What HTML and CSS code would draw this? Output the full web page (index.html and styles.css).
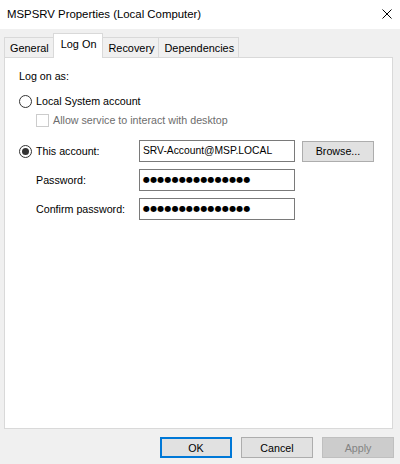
FILE: index.html
```html
<!DOCTYPE html>
<html>
<head>
<meta charset="utf-8">
<link rel="stylesheet" href="styles.css">
</head>
<body>
<div class="window">
  <div class="titlebar">
    <span class="title">MSPSRV Properties (Local Computer)</span>
    <svg class="close" width="10" height="10" viewBox="0 0 10 10"><path d="M0.5 0.5L9.5 9.5M9.5 0.5L0.5 9.5" stroke="#000" stroke-width="1" fill="none"/></svg>
  </div>
  <div class="tabs">
    <div class="tab">General</div>
    <div class="tab active">Log On</div>
    <div class="tab">Recovery</div>
    <div class="tab">Dependencies</div>
  </div>
  <div class="panel">
    <div class="heading">Log on as:</div>
    <div class="row radio-row">
      <span class="radio"></span><span class="rlabel">Local System account</span>
    </div>
    <div class="row check-row">
      <span class="checkbox"></span><span class="clabel">Allow service to interact with desktop</span>
    </div>
    <div class="row field-row first">
      <div class="label-col"><span class="radio checked"></span><span class="rlabel">This account:</span></div>
      <div class="textbox">SRV-Account@MSP.LOCAL</div>
      <div class="button browse">Browse...</div>
    </div>
    <div class="row field-row pw1">
      <div class="label-col indent">Password:</div>
      <div class="textbox dots">●●●●●●●●●●●●●●●</div>
    </div>
    <div class="row field-row pw2">
      <div class="label-col indent">Confirm password:</div>
      <div class="textbox dots">●●●●●●●●●●●●●●●</div>
    </div>
  </div>
  <div class="footer">
    <div class="button default">OK</div>
    <div class="button">Cancel</div>
    <div class="button disabled">Apply</div>
  </div>
</div>
</body>
</html>
```

FILE: styles.css
```css
* { box-sizing: border-box; }
html, body { margin: 0; padding: 0; }
body {
  width: 400px;
  height: 464px;
  background: #f0f0f0;
  font-family: "Liberation Sans", Arial, sans-serif;
  font-size: 10.7px;
  color: #000;
  overflow: hidden;
}
.window { width: 400px; height: 464px; display: flex; flex-direction: column; }
.titlebar {
  height: 29px;
  background: #fff;
  display: flex;
  align-items: center;
  justify-content: space-between;
  padding: 0 8px 0 7px;
}
.title { font-size: 11.4px; position: relative; top: -1px; }
.close { margin-top: -1px; }
.tabs {
  display: flex;
  align-items: flex-end;
  padding-left: 4px;
  height: 28px;
  position: relative;
  z-index: 1;
}
.tab {
  height: 20px;
  line-height: 18px;
  padding: 1px 4px 0 5px;
  border: 1px solid #d9d9d9;
  border-bottom: none;
  border-left: none;
  background: #f0f0f0;
  white-space: nowrap;
  font-size: 10.9px;
}
.tab:first-child { border-left: 1px solid #d9d9d9; }
.tab.active {
  height: 25px;
  line-height: 20px;
  background: #fff;
  padding: 0 6px 0 7px;
  margin-bottom: -1px;
  margin-left: -1px;
  border-left: 1px solid #d9d9d9;
}
.panel {
  margin: 0 7px 0 4px;
  height: 372px;
  background: #fff;
  border: 1px solid #d9d9d9;
  padding: 10px 0 0 14px;
  display: flex;
  flex-direction: column;
}
.heading { height: 16px; line-height: 16px; }
.row { display: flex; align-items: center; white-space: nowrap; }
.radio-row { margin-top: 9px; height: 16px; }
.radio {
  width: 13px; height: 13px;
  border: 1px solid #333;
  border-radius: 50%;
  background: #fff;
  display: inline-flex;
  align-items: center;
  justify-content: center;
  flex: none;
}
.radio.checked::after {
  content: "";
  width: 7px; height: 7px;
  border-radius: 50%;
  background: #333;
}
.rlabel { margin-left: 4px; }
.check-row { margin-top: 3px; height: 16px; padding-left: 17px; }
.checkbox {
  width: 13px; height: 13px;
  border: 1px solid #cccccc;
  background: #fff;
  flex: none;
}
.clabel { margin-left: 4px; color: #6d6d6d; }
.field-row { height: 22px; }
.field-row.first { margin-top: 12px; }
.field-row.pw1 { margin-top: 7px; }
.field-row.pw2 { margin-top: 7px; }
.label-col { width: 120px; display: flex; align-items: center; flex: none; white-space: nowrap; }
.label-col.indent { padding-left: 17px; }
.textbox {
  width: 156px;
  height: 22px;
  border: 1px solid #7a7a7a;
  padding: 0 3px;
  line-height: 20px;
  white-space: nowrap;
  overflow: hidden;
  font-size: 10.3px;
}
.textbox.dots { font-family: "DejaVu Sans", sans-serif; font-size: 8px; letter-spacing: 0.2px; line-height: 20px; padding-left: 3px; }
.button {
  width: 72px;
  height: 21px;
  border: 1px solid #adadad;
  background: #e1e1e1;
  display: flex;
  align-items: center;
  justify-content: center;
  flex: none;
}
.browse { margin-left: 7px; }
.footer {
  display: flex;
  justify-content: flex-end;
  gap: 9px;
  padding: 8px 6px 0 0;
}
.button.default { border: 2px solid #0078d7; }
.button.disabled { background: #cccccc; border-color: #bfbfbf; color: #838383; }
```
